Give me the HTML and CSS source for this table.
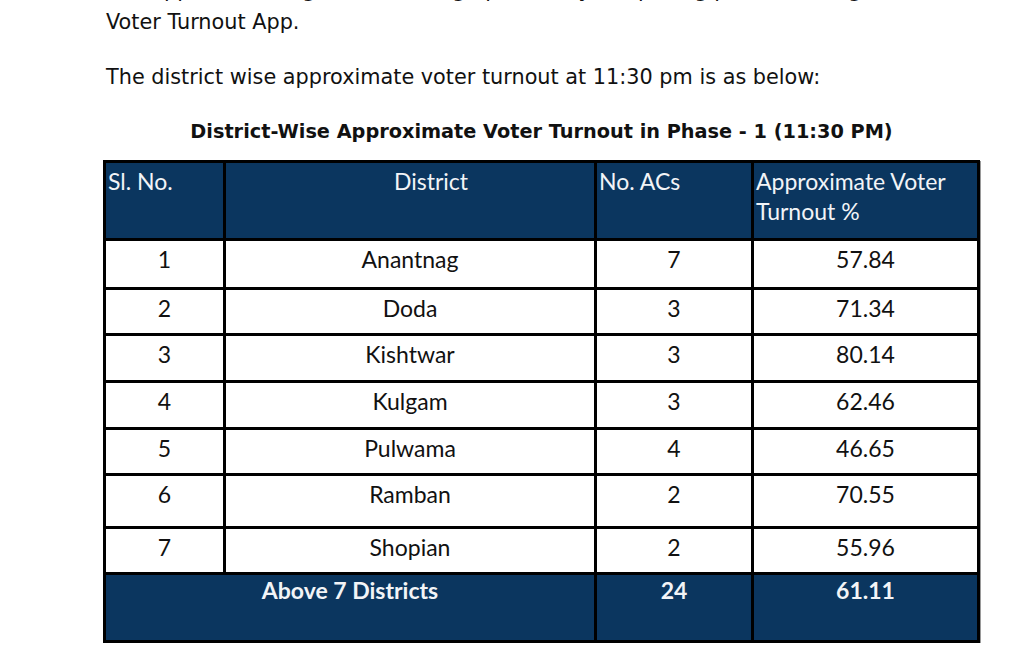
FILE: index.html
```html
<!DOCTYPE html>
<html lang="en">
<head>
<meta charset="utf-8">
<title>District-Wise Approximate Voter Turnout</title>
<link rel="stylesheet" href="styles.css">
</head>
<body>
<div class="doc">
  <p class="para"><span class="cut">The approximate figures are being updated by the polling parties through</span>Voter Turnout App.</p>
  <p class="para">The district wise approximate voter turnout at 11:30 pm is as below:</p>
  <div class="report">
    <h2 class="title">District-Wise Approximate Voter Turnout in Phase - 1 (11:30 PM)</h2>
    <table class="turnout">
      <colgroup>
        <col class="c-sl">
        <col class="c-dist">
        <col class="c-acs">
        <col class="c-pct">
      </colgroup>
      <thead>
        <tr class="head">
          <th class="left">Sl. No.</th>
          <th class="dist">District</th>
          <th class="left">No. ACs</th>
          <th class="left">Approximate Voter<br>Turnout %</th>
        </tr>
      </thead>
      <tbody>
        <tr class="row r-a"><td>1</td><td>Anantnag</td><td>7</td><td>57.84</td></tr>
        <tr class="row"><td>2</td><td>Doda</td><td>3</td><td>71.34</td></tr>
        <tr class="row r-c"><td>3</td><td>Kishtwar</td><td>3</td><td>80.14</td></tr>
        <tr class="row r-c"><td>4</td><td>Kulgam</td><td>3</td><td>62.46</td></tr>
        <tr class="row"><td>5</td><td>Pulwama</td><td>4</td><td>46.65</td></tr>
        <tr class="row r-b"><td>6</td><td>Ramban</td><td>2</td><td>70.55</td></tr>
        <tr class="row"><td>7</td><td>Shopian</td><td>2</td><td>55.96</td></tr>
        <tr class="total"><td colspan="2">Above 7 Districts</td><td>24</td><td>61.11</td></tr>
      </tbody>
    </table>
  </div>
</div>
</body>
</html>
```

FILE: styles.css
```css
html, body {
  margin: 0;
  background: #ffffff;
}

body {
  font-family: "DejaVu Sans", Verdana, sans-serif;
  color: #111111;
}

.doc {
  padding-left: 106px;
  margin-top: -24px;
}

.para {
  margin: 0 0 27px;
  font-size: 20.8px;
  line-height: 28px;
  white-space: nowrap;
}

.cut {
  display: block;
  margin-bottom: 4px;
}

.report {
  margin-left: -3px;
  width: 877px;
}

.title {
  margin: 0 0 14px;
  font-size: 19.3px;
  line-height: 28px;
  font-weight: bold;
  text-align: center;
  color: #111111;
}

.turnout {
  width: 874px;
  border-collapse: collapse;
  table-layout: fixed;
  font-family: Lato, "Liberation Sans", sans-serif;
  font-size: 23px;
  box-shadow: 1px 1px 0 #9a9a9a;
}

.c-sl { width: 120px; }
.c-dist { width: 371px; }
.c-acs { width: 157px; }
.c-pct { width: 226px; }

.turnout th,
.turnout td {
  border: 3px solid #000000;
  vertical-align: top;
  padding: 0;
}

.head {
  height: 78px;
}

.head th {
  background: #0b365f;
  color: #f2f4f7;
  font-weight: normal;
  text-align: center;
  line-height: 30px;
  padding: 3px 2px 0;
}

.head th.left {
  text-align: left;
}

.head th.dist {
  padding-left: 44px;
}

.row {
  height: 46px;
}

.r-a {
  height: 49px;
}

.r-c {
  height: 47px;
}

.r-b {
  height: 53px;
}

.row td {
  text-align: center;
  line-height: 26px;
  padding-top: 5px;
  color: #111111;
}

.total {
  height: 68px;
}

.total td {
  background: #0b365f;
  color: #f2f4f7;
  font-weight: bold;
  text-align: center;
  line-height: 26px;
  padding-top: 2px;
}
```
